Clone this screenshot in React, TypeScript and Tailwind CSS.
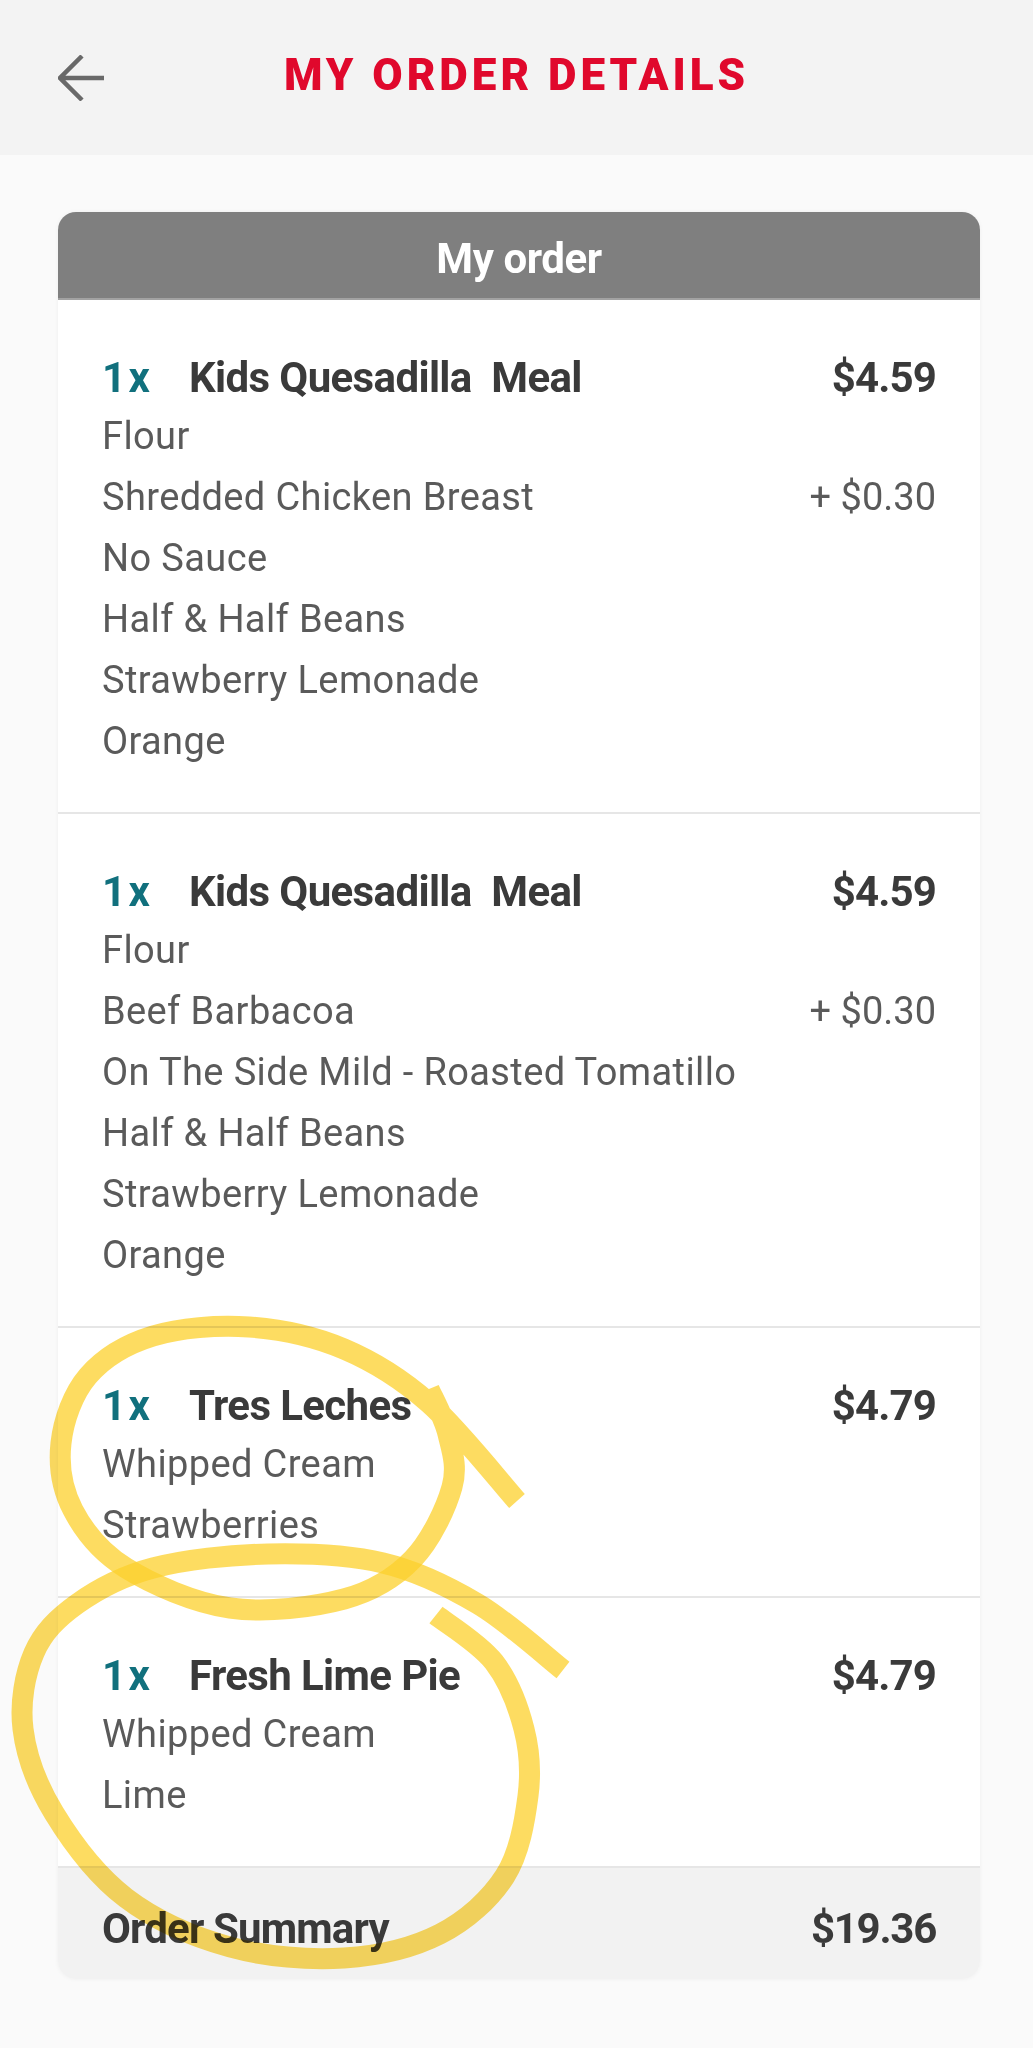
import React from 'react';

type Pt = [number, number];

// smooth pen stroke through the given points
const smooth = (pts: Pt[]) => {
	let d = `M${pts[0][0]} ${pts[0][1]}`;
	for (let i = 0; i < pts.length - 1; i++) {
		const p0 = pts[i - 1] || pts[i];
		const p1 = pts[i];
		const p2 = pts[i + 1];
		const p3 = pts[i + 2] || p2;
		const c1x = p1[0] + (p2[0] - p0[0]) / 6;
		const c1y = p1[1] + (p2[1] - p0[1]) / 6;
		const c2x = p2[0] - (p3[0] - p1[0]) / 6;
		const c2y = p2[1] - (p3[1] - p1[1]) / 6;
		d += ` C${c1x.toFixed(1)} ${c1y.toFixed(1)} ${c2x.toFixed(1)} ${c2y.toFixed(1)} ${p2[0]} ${p2[1]}`;
	}
	return d;
};

const loopOne: Pt[] = [
	[517, 1501],
	[429, 1403],
	[344, 1349],
	[249, 1327],
	[153, 1336],
	[88, 1376],
	[61, 1443],
	[73, 1510],
	[126, 1568],
	[230, 1608],
	[344, 1599],
	[413, 1559],
	[452, 1487],
	[448, 1434],
	[429, 1389],
];

const loopTwo: Pt[] = [
	[436, 1615],
	[494, 1662],
	[524, 1729],
	[528, 1796],
	[505, 1876],
	[440, 1934],
	[344, 1958],
	[230, 1947],
	[126, 1898],
	[54, 1813],
	[23, 1729],
	[34, 1653],
	[77, 1604],
	[153, 1568],
	[268, 1554],
	[383, 1563],
	[478, 1604],
	[563, 1670],
];

type Item = {
	name: string;
	price: string;
	lines: { label: string; extra?: string }[];
};

const items: Item[] = [
	{
		name: 'Kids Quesadilla\u00a0 Meal',
		price: '$4.59',
		lines: [
			{ label: 'Flour' },
			{ label: 'Shredded Chicken Breast', extra: '+ $0.30' },
			{ label: 'No Sauce' },
			{ label: 'Half & Half Beans' },
			{ label: 'Strawberry Lemonade' },
			{ label: 'Orange' },
		],
	},
	{
		name: 'Kids Quesadilla\u00a0 Meal',
		price: '$4.59',
		lines: [
			{ label: 'Flour' },
			{ label: 'Beef Barbacoa', extra: '+ $0.30' },
			{ label: 'On The Side Mild - Roasted Tomatillo' },
			{ label: 'Half & Half Beans' },
			{ label: 'Strawberry Lemonade' },
			{ label: 'Orange' },
		],
	},
	{
		name: 'Tres Leches',
		price: '$4.79',
		lines: [{ label: 'Whipped Cream' }, { label: 'Strawberries' }],
	},
	{
		name: 'Fresh Lime Pie',
		price: '$4.79',
		lines: [{ label: 'Whipped Cream' }, { label: 'Lime' }],
	},
];

const OrderItem = ({ item }: { item: Item }) => (
	<div className="border-b-2 border-[#e6e6e6] bg-white px-[44px] pt-[50px] pb-[40px]">
		<div className="flex items-center justify-between leading-[56px]">
			<div className="flex items-center">
				<span className="w-[87px] text-[42px] font-bold tracking-[0.06em] text-[#11707d]">
					1x
				</span>
				<span className="text-[42px] font-bold tracking-[-0.015em] text-[#3a3a3a]">
					{item.name}
				</span>
			</div>
			<span className="text-[42px] font-bold tracking-[-0.02em] text-[#3a3a3a]">
				{item.price}
			</span>
		</div>
		{item.lines.map((line, i) => (
			<div key={i} className="flex items-center justify-between">
				<span className="text-[38px] leading-[61px] tracking-[0.01em] text-[#5a5a5a]">
					{line.label}
				</span>
				{line.extra && (
					<span className="text-[38px] leading-[61px] text-[#5a5a5a]">
						{line.extra}
					</span>
				)}
			</div>
		))}
	</div>
);

export default function App() {
	return (
		<div className="relative min-h-[2048px] w-full bg-[#fafafa] font-['Roboto',sans-serif]">
			<header className="grid h-[155px] grid-cols-[1fr_auto_1fr] items-center bg-[#f3f3f3]">
				<div className="pl-[58px]">
					<svg width="46" height="46" viewBox="0 0 46 46" fill="none">
						<path
							d="M46 23H3M24 1L2 23l22 22"
							stroke="#696969"
							strokeWidth="4.5"
						/>
					</svg>
				</div>
				<h1 className="-mt-[6px] text-[44px] font-black tracking-[0.09em] text-[#e0082c]">
					MY ORDER DETAILS
				</h1>
				<div />
			</header>

			<main className="pt-[57px] pr-[53px] pl-[58px]">
				<div className="overflow-hidden rounded-[18px] shadow-[0_0_4px_rgba(0,0,0,0.05)]">
					<div className="flex h-[88px] items-center justify-center border-b-2 border-[#a2a2a2] bg-[#7f7f7f] pt-[6px]">
						<span className="text-[42px] font-bold tracking-[-0.01em] text-white">
							My order
						</span>
					</div>
					{items.map((item, i) => (
						<OrderItem key={i} item={item} />
					))}
					<div className="flex h-[111px] items-center justify-between bg-[#f2f2f2] px-[44px] pt-[10px]">
						<span className="text-[42px] font-bold tracking-[-0.02em] text-[#3a3a3a]">
							Order Summary
						</span>
						<span className="text-[42px] font-bold tracking-[-0.03em] text-[#3a3a3a]">
							$19.36
						</span>
					</div>
				</div>
			</main>

			<svg
				className="pointer-events-none absolute top-0 left-0 mix-blend-multiply"
				width="1033"
				height="2048"
				viewBox="0 0 1033 2048"
				fill="none"
			>
				<path
					d={smooth(loopOne)}
					stroke="#fcd02c"
					strokeOpacity="0.75"
					strokeWidth="21"
					strokeLinecap="butt"
				/>
				<path
					d={smooth(loopTwo)}
					stroke="#fcd02c"
					strokeOpacity="0.75"
					strokeWidth="21"
					strokeLinecap="butt"
				/>
			</svg>
		</div>
	);
}
